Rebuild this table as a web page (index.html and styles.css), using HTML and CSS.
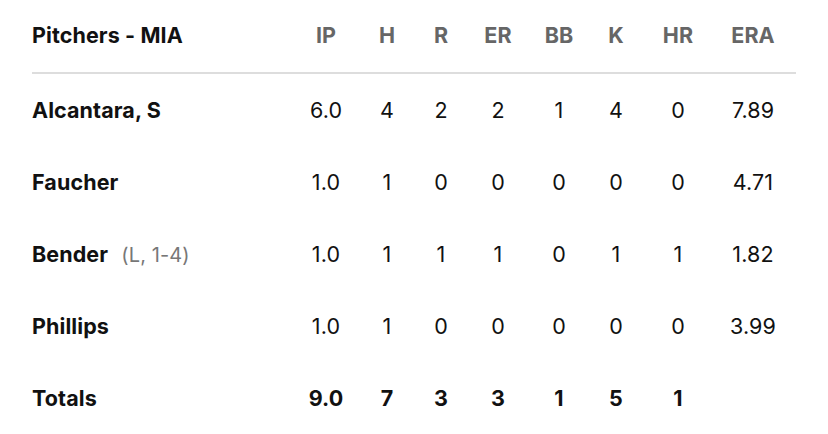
FILE: index.html
```html
<!DOCTYPE html>
<html lang="en">
<head>
    <meta charset="UTF-8">
    <meta name="viewport" content="width=device-width, initial-scale=1.0">
    <title>Pitchers - MIA</title>
    <link rel="stylesheet" href="styles.css">
</head>
<body>
    <table class="box-score">
        <colgroup>
            <col class="col-name">
            <col class="col-ip">
            <col class="col-h">
            <col class="col-r">
            <col class="col-er">
            <col class="col-bb">
            <col class="col-k">
            <col class="col-hr">
            <col class="col-era">
        </colgroup>
        <thead>
            <tr>
                <th class="name">Pitchers - MIA</th>
                <th>IP</th>
                <th>H</th>
                <th>R</th>
                <th>ER</th>
                <th>BB</th>
                <th>K</th>
                <th>HR</th>
                <th>ERA</th>
            </tr>
        </thead>
        <tbody>
            <tr>
                <td class="name">Alcantara, S</td>
                <td>6.0</td><td>4</td><td>2</td><td>2</td><td>1</td><td>4</td><td>0</td><td>7.89</td>
            </tr>
            <tr>
                <td class="name">Faucher</td>
                <td>1.0</td><td>1</td><td>0</td><td>0</td><td>0</td><td>0</td><td>0</td><td>4.71</td>
            </tr>
            <tr>
                <td class="name">Bender <span class="note">(L, 1-4)</span></td>
                <td>1.0</td><td>1</td><td>1</td><td>1</td><td>0</td><td>1</td><td>1</td><td>1.82</td>
            </tr>
            <tr>
                <td class="name">Phillips</td>
                <td>1.0</td><td>1</td><td>0</td><td>0</td><td>0</td><td>0</td><td>0</td><td>3.99</td>
            </tr>
            <tr class="totals">
                <td class="name">Totals</td>
                <td>9.0</td><td>7</td><td>3</td><td>3</td><td>1</td><td>5</td><td>1</td><td></td>
            </tr>
        </tbody>
    </table>
</body>
</html>
```

FILE: styles.css
```css
body {
    margin: 0;
    background-color: #fff;
    font-family: Inter, "Liberation Sans", Arial, sans-serif;
    color: #111;
}
.box-score {
    margin-left: 32px;
    width: 764px;
    border-collapse: collapse;
    table-layout: fixed;
}
.col-name { width: 264px; }
.col-ip { width: 60px; }
.col-h { width: 62px; }
.col-r { width: 46px; }
.col-er { width: 68px; }
.col-bb { width: 54px; }
.col-k { width: 60px; }
.col-hr { width: 64px; }
.col-era { width: 86px; }
th, td {
    padding: 0;
    text-align: center;
    font-size: 21.5px;
    letter-spacing: 0.1px;
    white-space: nowrap;
}
thead th {
    height: 70px;
    padding-bottom: 2px;
    font-weight: 700;
    color: #666;
    border-bottom: 2px solid #ddd;
}
thead th.name {
    color: #111;
}
tbody td {
    height: 72px;
    font-weight: 400;
}
.name {
    text-align: left;
    font-weight: 700;
}
tbody td.name {
    font-weight: 700;
}
.note {
    margin-left: 8px;
    font-size: 20px;
    font-weight: 400;
    color: #777;
}
.totals td {
    font-weight: 700;
}
```
